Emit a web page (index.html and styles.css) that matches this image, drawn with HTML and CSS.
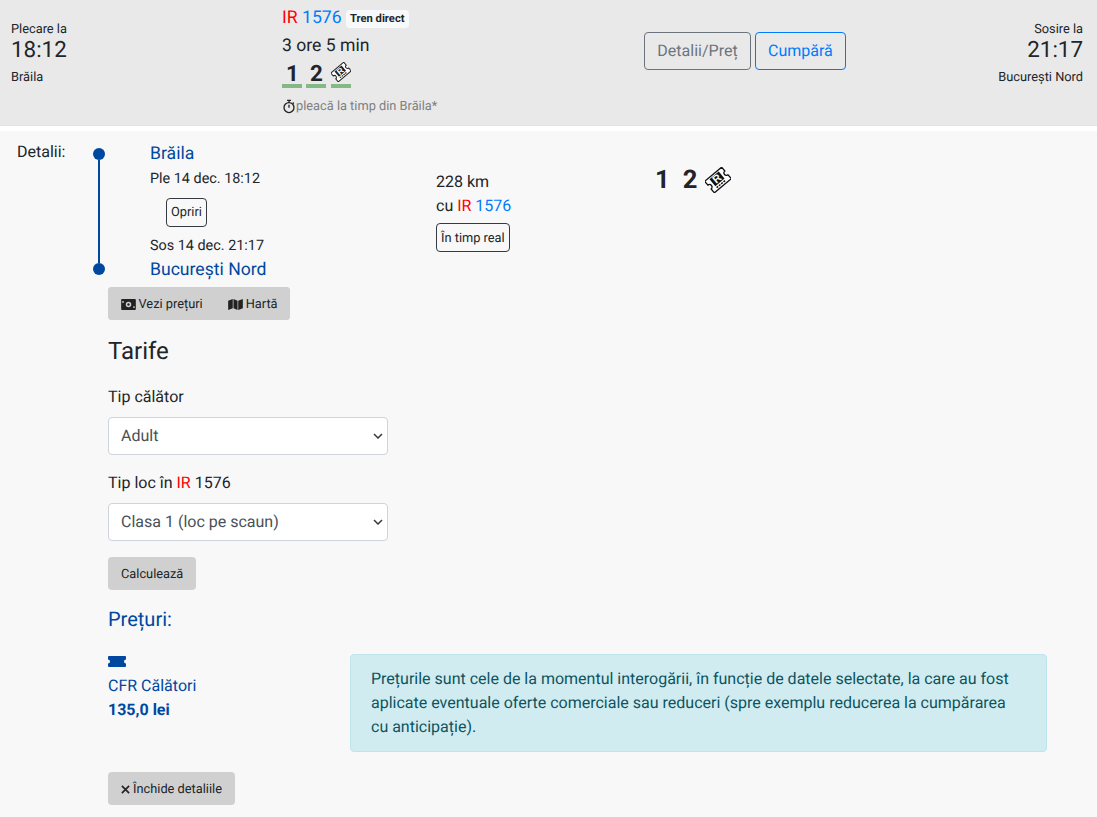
FILE: index.html
```html
<!DOCTYPE html>
<html lang="ro">
<head>
    <meta charset="UTF-8">
    <title>Itinerar Brăila - București Nord</title>
    <link rel="stylesheet" href="styles.css">
</head>
<body>
    <header class="summary">
        <div class="summary-from">
            <div class="small-text">Plecare la</div>
            <div class="time">18:12</div>
            <div class="small-text">Brăila</div>
        </div>
        <div class="summary-train">
            <div class="train-line">
                <span class="red">IR</span> <span class="blue">1576</span>
                <span class="badge">Tren direct</span>
            </div>
            <div class="duration">3 ore 5 min</div>
            <div class="classes">
                <span class="class-item">1</span>
                <span class="class-item">2</span>
                <span class="class-item">
                    <svg class="ticket-small" viewBox="0 0 26 26">
                        <g transform="rotate(-40 13 13)">
                            <path d="M2 5.500h22v5a2.500 2.500 0 0 0 0 5v5H2v-5a2.500 2.500 0 0 0 0-5z" fill="#fff" stroke="#222" stroke-width="1.3"/>
                            <rect x="7" y="7" width="12" height="9" fill="#222"/>
                            <text x="13" y="15" text-anchor="middle" class="ticket-letter">R</text>
                            <path d="M7 18h12" stroke="#222" stroke-width="1.500" stroke-dasharray="2 1"/>
                        </g>
                    </svg>
                </span>
            </div>
            <div class="on-time">
                <svg class="stopwatch" viewBox="0 0 16 16" fill="none" stroke="#222" stroke-width="1.5">
                    <circle cx="8" cy="9.2" r="5.7"/>
                    <path d="M8 6v3.5M5.800 1h4.400M8 1v2.500M12.300 3.500l1.200 1.200"/>
                </svg>
                pleacă la timp din Brăila*
            </div>
        </div>
        <div class="summary-actions">
            <button class="btn-outline grey">Detalii/Preț</button>
            <button class="btn-outline primary">Cumpără</button>
        </div>
        <div class="summary-to">
            <div class="small-text">Sosire la</div>
            <div class="time">21:17</div>
            <div class="small-text">București Nord</div>
        </div>
    </header>

    <main class="details">
        <div class="details-label">Detalii:</div>
        <div class="details-body">
            <div class="route">
                <div class="timeline">
                    <span class="dot"></span>
                    <span class="line"></span>
                    <span class="dot"></span>
                </div>
                <div class="stations">
                    <div class="station">Brăila</div>
                    <div class="stop-time">Ple 14 dec. 18:12</div>
                    <button class="btn-small stops">Opriri</button>
                    <div class="stop-time arrive">Sos 14 dec. 21:17</div>
                    <div class="station">București Nord</div>
                </div>
                <div class="segment">
                    <div>228 km</div>
                    <div>cu <span class="red">IR</span> <span class="blue">1576</span></div>
                    <button class="btn-small realtime">În timp real</button>
                </div>
                <div class="segment-classes">
                    <span>1</span>
                    <span>2</span>
                    <svg class="ticket-large" viewBox="0 0 26 26">
                        <g transform="rotate(-40 13 13)">
                            <path d="M2 5.500h22v5a2.500 2.500 0 0 0 0 5v5H2v-5a2.500 2.500 0 0 0 0-5z" fill="#fff" stroke="#111" stroke-width="1.3"/>
                            <rect x="7" y="7" width="12" height="9" fill="#111"/>
                            <text x="13" y="15" text-anchor="middle" class="ticket-letter">R</text>
                            <path d="M7 18h12" stroke="#111" stroke-width="1.500" stroke-dasharray="2 1"/>
                        </g>
                    </svg>
                </div>
            </div>

            <div class="btn-group">
                <button class="btn-grey">
                    <svg class="icon" viewBox="0 0 16 12"><path fill-rule="evenodd" d="M1 0h14a1 1 0 0 1 1 1v10a1 1 0 0 1-1 1H1a1 1 0 0 1-1-1V1a1 1 0 0 1 1-1zm7 3a3 3 0 1 0 0 6 3 3 0 0 0 0-6zM2 2.200a1 1 0 1 0 0 2 1 1 0 0 0 0-2zm12 5.600a1 1 0 1 0 0 2 1 1 0 0 0 0-2z" fill="#222"/><circle cx="8" cy="6" r="1.300" fill="#222"/></svg>
                    Vezi prețuri
                </button>
                <button class="btn-grey">
                    <svg class="icon" viewBox="0 0 16 12"><path d="M0 2 5 0v10l-5 2zM5.800 0l4.400 2v10l-4.400-2zM11 2l5-2v10l-5 2z" fill="#222"/></svg>
                    Hartă
                </button>
            </div>

            <h2 class="fares-title">Tarife</h2>
            <label class="field-label">Tip călător</label>
            <select class="select"><option>Adult</option></select>
            <label class="field-label">Tip loc în <span class="red">IR</span> 1576</label>
            <select class="select"><option>Clasa 1 (loc pe scaun)</option></select>
            <button class="btn-grey btn-single">Calculează</button>

            <h3 class="prices-title">Prețuri:</h3>
            <div class="prices">
                <div class="price-item">
                    <svg class="ticket-icon" viewBox="0 0 18 11"><path d="M1 0h16a1 1 0 0 1 1 1v2.500a2 2 0 0 0 0 4V10a1 1 0 0 1-1 1H1a1 1 0 0 1-1-1V7.500a2 2 0 0 0 0-4V1a1 1 0 0 1 1-1z" fill="#0047a0"/></svg>
                    <div>CFR Călători</div>
                    <div class="price">135,0 lei</div>
                </div>
                <div class="alert">Prețurile sunt cele de la momentul interogării, în funcție de datele selectate, la care au fost aplicate eventuale oferte comerciale sau reduceri (spre exemplu reducerea la cumpărarea cu anticipație).</div>
            </div>

            <button class="btn-grey btn-single close">
                <svg class="icon-x" viewBox="0 0 10 10"><path d="M1 1l8 8M9 1l-8 8" stroke="#222" stroke-width="1.8"/></svg>
                Închide detaliile
            </button>
        </div>
    </main>
</body>
</html>
```

FILE: styles.css
```css
* {
    box-sizing: border-box;
}
body {
    margin: 0;
    font-family: Roboto, sans-serif;
    font-size: 16px;
    line-height: 24px;
    color: #212529;
    background-color: #f8f8f8;
    text-rendering: geometricPrecision;
}
button, select {
    font-family: inherit;
    text-rendering: geometricPrecision;
}
.ticket-letter {
    font-family: "Liberation Sans", sans-serif;
    font-size: 11px;
    font-weight: 700;
    fill: #fff;
}
.red {
    color: #ff0000;
}
.blue {
    color: #007bff;
}

/* top row */
.summary {
    display: grid;
    grid-template-columns: 271px 362px 1fr auto;
    height: 126px;
    padding: 0 14px 0 11px;
    background-color: #e9e9e9;
    border-bottom: 1px solid #e2e2e2;
}
.summary-from {
    padding-top: 20px;
}
.summary-to {
    padding-top: 20px;
    text-align: right;
}
.small-text {
    font-size: 12.8px;
    line-height: 19px;
}
.time {
    margin: -1px 0 6px;
    font-size: 22.4px;
    line-height: 24px;
}
.summary-train {
    padding-top: 7px;
}
.train-line {
    font-size: 17.6px;
    line-height: 23px;
}
.badge {
    display: inline-block;
    padding: 3px 4px 4px;
    background-color: #f8f9fa;
    border-radius: 4px;
    font-size: 11.2px;
    line-height: 11.2px;
    font-weight: 700;
    vertical-align: 1px;
}
.duration {
    font-size: 17.6px;
    line-height: 24px;
    margin-top: 4px;
}
.classes {
    display: flex;
    gap: 4px;
    margin-top: 2px;
}
.class-item {
    display: flex;
    justify-content: center;
    align-items: center;
    width: 20px;
    height: 28px;
    padding: 3px 0 0 1px;
    border-bottom: 4px solid #84b884;
    font-size: 22.4px;
    font-weight: 700;
    line-height: 24px;
}
.class-item:last-child {
    margin-left: 1px;
    padding: 0;
}
.ticket-small {
    flex-shrink: 0;
    width: 20px;
    height: 20px;
}
.on-time {
    display: flex;
    align-items: center;
    margin-top: 7px;
    font-size: 12.8px;
    line-height: 24px;
    color: #808080;
}
.stopwatch {
    width: 14px;
    height: 15px;
    margin-top: -2px;
}
.summary-actions {
    display: flex;
    gap: 4px;
    padding-top: 32px;
    align-items: flex-start;
}
.btn-outline {
    height: 38px;
    padding: 0 12px 1px;
    background: transparent;
    border: 1px solid;
    border-radius: 4px;
    font-size: 16px;
}
.btn-outline.grey {
    width: 107px;
    color: #6c757d;
    border-color: #6c757d;
}
.btn-outline.primary {
    color: #007bff;
    border-color: #007bff;
}

/* details */
.details {
    display: flex;
    margin-top: 5px;
    padding: 9px 0 0 17px;
    background-color: #f8f8f8;
    box-shadow: 0 -5px 0 #fff;
}
.details-label {
    width: 91px;
    flex-shrink: 0;
}
.details-body {
    flex: 1;
    padding-right: 50px;
}
.route {
    display: flex;
}
.timeline {
    display: flex;
    flex-direction: column;
    align-items: center;
    width: 42px;
    height: 127px;
    margin: 8px 0 0 -30px;
}
.dot {
    width: 12px;
    height: 12px;
    flex-shrink: 0;
    border-radius: 50%;
    background-color: #0047a0;
}
.line {
    width: 2px;
    flex: 1;
    background-color: #0047a0;
}
.stations {
    width: 316px;
    padding: 2px 0 0 30px;
}
.station {
    font-size: 17.6px;
    line-height: 24px;
    color: #0047a0;
}
.stop-time {
    margin-top: 1px;
    font-size: 14.4px;
    line-height: 24px;
}
.stop-time.arrive {
    margin-top: 7px;
}
.btn-small {
    display: block;
    height: 29px;
    padding: 0 4px;
    background: transparent;
    border: 1px solid #343a40;
    border-radius: 4px;
    font-size: 12.8px;
    color: #212529;
}
.stops {
    margin: 7px 0 0 16px;
}
.segment {
    width: 219px;
    padding-top: 30px;
}
.realtime {
    margin-top: 5px;
    padding-top: 1px;
}
.segment-classes {
    display: flex;
    align-items: center;
    gap: 13px;
    height: 24px;
    margin-top: 28px;
    font-size: 25.6px;
    font-weight: 700;
}
.ticket-large {
    width: 26px;
    height: 26px;
    margin-left: -5px;
}
.btn-group {
    display: flex;
    width: 182px;
    height: 33px;
    margin-top: 5px;
    background-color: #d0d0d0;
    border-radius: 4px;
}
.btn-grey {
    display: flex;
    align-items: center;
    justify-content: center;
    gap: 3px;
    height: 33px;
    padding: 1px 13px 0;
    background-color: #d0d0d0;
    border: 0;
    border-radius: 4px;
    font-size: 12.8px;
    white-space: nowrap;
    color: #212529;
}
.btn-group .btn-grey {
    padding: 1px 12.5px 0;
}
.icon {
    width: 15px;
    height: 11px;
}
.icon-x {
    width: 9px;
    height: 9px;
}
.fares-title {
    margin: 15px 0 18px;
    font-size: 24px;
    font-weight: 400;
    line-height: 32px;
}
.field-label {
    display: block;
    margin-bottom: 8px;
    line-height: 24px;
}
.select {
    display: block;
    width: 280px;
    height: 38px;
    margin-bottom: 16px;
    padding: 0 12px 2px;
    appearance: none;
    background: #fff url("data:image/svg+xml,%3Csvg xmlns='http://www.w3.org/2000/svg' width='10' height='6'%3E%3Cpath d='M1 1l4 4 4-4' fill='none' stroke='%23343a40' stroke-width='1.5'/%3E%3C/svg%3E") no-repeat right 4px center;
    border: 1px solid #ced4da;
    border-radius: 4px;
    font-size: 16px;
    color: #495057;
}
.prices-title {
    margin: 17px 0 0;
    font-size: 20px;
    font-weight: 400;
    line-height: 24px;
    color: #0047a0;
}
.prices {
    display: flex;
    margin-top: 23px;
}
.price-item {
    width: 242px;
    padding-top: 2px;
    color: #0047a0;
}
.ticket-icon {
    display: block;
    width: 18px;
    height: 11px;
    margin-bottom: 7px;
}
.price {
    font-weight: 700;
}
.alert {
    flex: 1;
    height: 98px;
    padding: 12px 20px;
    background-color: #d1ecf1;
    border: 1px solid #bee5eb;
    border-radius: 4px;
    color: #0c5460;
}
.close {
    margin-top: 20px;
}
```
